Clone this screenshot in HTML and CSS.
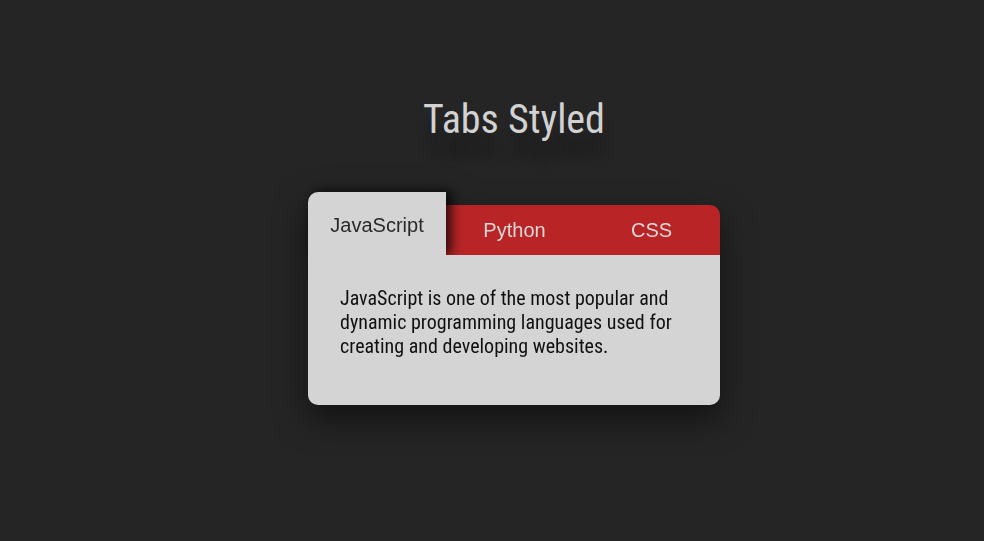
FILE: index.html
```html
<!DOCTYPE html>
<html lang="en">
<head>
<meta charset="utf-8">
<title>Tabs Styled</title>
<link rel="stylesheet" href="styles.css">
</head>
<body>
<main class="page">
  <h1 class="title">Tabs Styled</h1>
  <section class="card">
    <div class="tabs">
      <div class="tab tab-active">JavaScript</div>
      <div class="tab">Python</div>
      <div class="tab tab-last">CSS</div>
    </div>
    <div class="panel">
      <p class="panel-text">JavaScript is one of the most popular and dynamic programming languages used for creating and developing websites.</p>
    </div>
  </section>
</main>
</body>
</html>
```

FILE: styles.css
```css
html, body {
  margin: 0;
  padding: 0;
  background: #252525;
}
.page {
  display: flex;
  flex-direction: column;
  align-items: center;
  padding: 96px 0 0 44px;
  height: 541px;
  box-sizing: border-box;
}
.title {
  margin: 0;
  font-family: "Roboto Condensed", Roboto, sans-serif;
  font-weight: 400;
  font-size: 40px;
  line-height: 48px;
  color: #d2d2d2;
  text-shadow: 0 24px 12px rgba(0, 0, 0, 0.3);
}
.card {
  margin-top: 48px;
  width: 412px;
  filter: drop-shadow(0 14px 16px rgba(0, 0, 0, 0.5));
}
.tabs {
  display: grid;
  grid-template-columns: 138px 137px 137px;
  align-items: end;
  height: 63px;
}
.tab {
  position: relative;
  height: 50px;
  display: flex;
  align-items: center;
  justify-content: center;
  background: #b92527;
  color: #d8d8d8;
  font-family: "Liberation Sans", Arial, sans-serif;
  font-size: 20px;
}
.tab-last {
  border-top-right-radius: 10px;
}
.tab-active {
  z-index: 1;
  height: 63px;
  background: #d4d4d4;
  color: #2a2a2a;
  border-top-left-radius: 10px;
  box-shadow: 5px 0 12px rgba(0, 0, 0, 0.8);
  padding-top: 3px;
  box-sizing: border-box;
}
.panel {
  position: relative;
  z-index: 2;
  height: 150px;
  background: #d4d4d4;
  border-radius: 0 0 10px 10px;
  padding: 31px 32px 0;
  box-sizing: border-box;
}
.panel-text {
  margin: 0;
  font-family: "Roboto Condensed", Roboto, sans-serif;
  font-size: 20px;
  line-height: 24px;
  color: #111;
}
```
